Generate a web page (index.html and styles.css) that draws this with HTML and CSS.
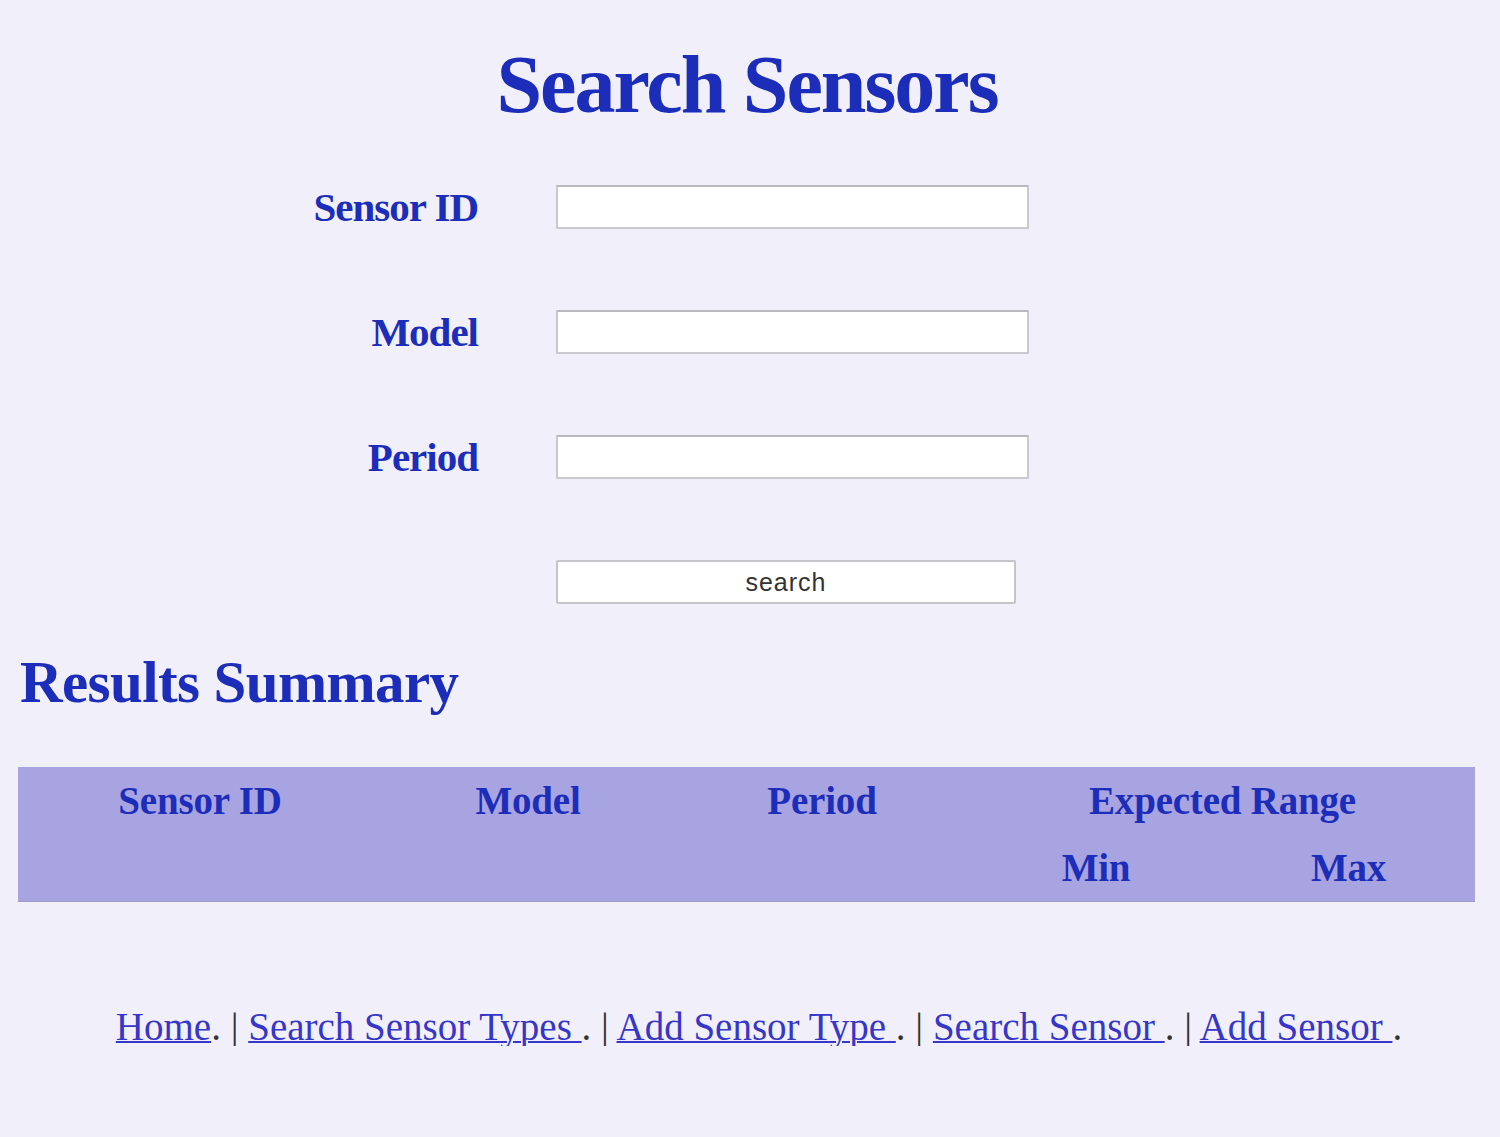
FILE: index.html
```html
<!DOCTYPE html>
<html>
<head>
<meta charset="utf-8">
<title>Search Sensors</title>
<link rel="stylesheet" href="styles.css">
</head>
<body>
<div class="page">
  <h1 class="title">Search Sensors</h1>
  <form class="search-form">
    <label class="label" for="sid">Sensor ID</label>
    <input class="field" id="sid" type="text">
    <label class="label" for="model">Model</label>
    <input class="field" id="model" type="text">
    <label class="label" for="period">Period</label>
    <input class="field" id="period" type="text">
    <span></span>
    <button class="btn" type="button">search</button>
  </form>
  <h2 class="subtitle">Results Summary</h2>
  <div class="results">
    <div class="th c1">Sensor ID</div>
    <div class="th c2">Model</div>
    <div class="th c3">Period</div>
    <div class="th range">Expected Range</div>
    <div class="th c1"></div>
    <div class="th c2"></div>
    <div class="th c3"></div>
    <div class="th">Min</div>
    <div class="th">Max</div>
  </div>
  <nav class="footer">
    <a href="#">Home</a>. | <a href="#">Search Sensor Types </a>. | <a href="#">Add Sensor Type </a>. | <a href="#">Search Sensor </a>. | <a href="#">Add Sensor </a>.
  </nav>
</div>
</body>
</html>
```
FILE: styles.css
```css
html, body {
  margin: 0;
  padding: 0;
  background: #f1f0fa;
}
.page {
  padding: 0 18px 0 18px;
  font-family: "Liberation Serif", "Times New Roman", serif;
  color: #1c2db9;
}
.title {
  margin: 44px 0 0;
  padding-right: 6px;
  font-size: 82px;
  line-height: 82px;
  font-weight: bold;
  text-align: center;
  letter-spacing: -2px;
}
.search-form {
  margin-top: 59px;
  display: grid;
  grid-template-columns: 460px 473px;
  column-gap: 78px;
  row-gap: 81px;
  align-items: center;
}
.label {
  text-align: right;
  font-size: 41px;
  line-height: 1;
  font-weight: bold;
  letter-spacing: -1px;
}
.field {
  box-sizing: border-box;
  width: 473px;
  height: 44px;
  margin: 0;
  background: #fff;
  border: 2px solid #c9c9cf;
  border-top-color: #b8b8be;
  padding: 0 8px;
}
.btn {
  box-sizing: border-box;
  width: 460px;
  height: 44px;
  margin: 0;
  background: #fff;
  border: 2px solid #c4c4ca;
  border-radius: 2px;
  font-family: "Liberation Sans", Arial, sans-serif;
  font-size: 25px;
  color: #333;
  letter-spacing: 1px;
}
.subtitle {
  margin: 49px 0 0 2px;
  font-size: 59px;
  line-height: 59px;
  font-weight: bold;
  letter-spacing: -0.6px;
}
.results {
  margin-top: 55px;
  width: 1457px;
  display: grid;
  grid-template-columns: 364px 292px 296px 252px 253px;
  grid-auto-rows: 67px;
  background: #a8a4e2;
  border-bottom: 1px solid #a09cc8;
}
.th {
  font-size: 39px;
  line-height: 67px;
  font-weight: bold;
  text-align: center;
  letter-spacing: -0.2px;
}
.range {
  grid-column: span 2;
}
.footer {
  margin-top: 105px;
  text-align: center;
  font-size: 39px;
  line-height: 39px;
  color: #333;
  padding-left: 18px;
}
.footer a {
  color: #3636c8;
  text-decoration: underline;
  text-decoration-thickness: 2px;
}
```
